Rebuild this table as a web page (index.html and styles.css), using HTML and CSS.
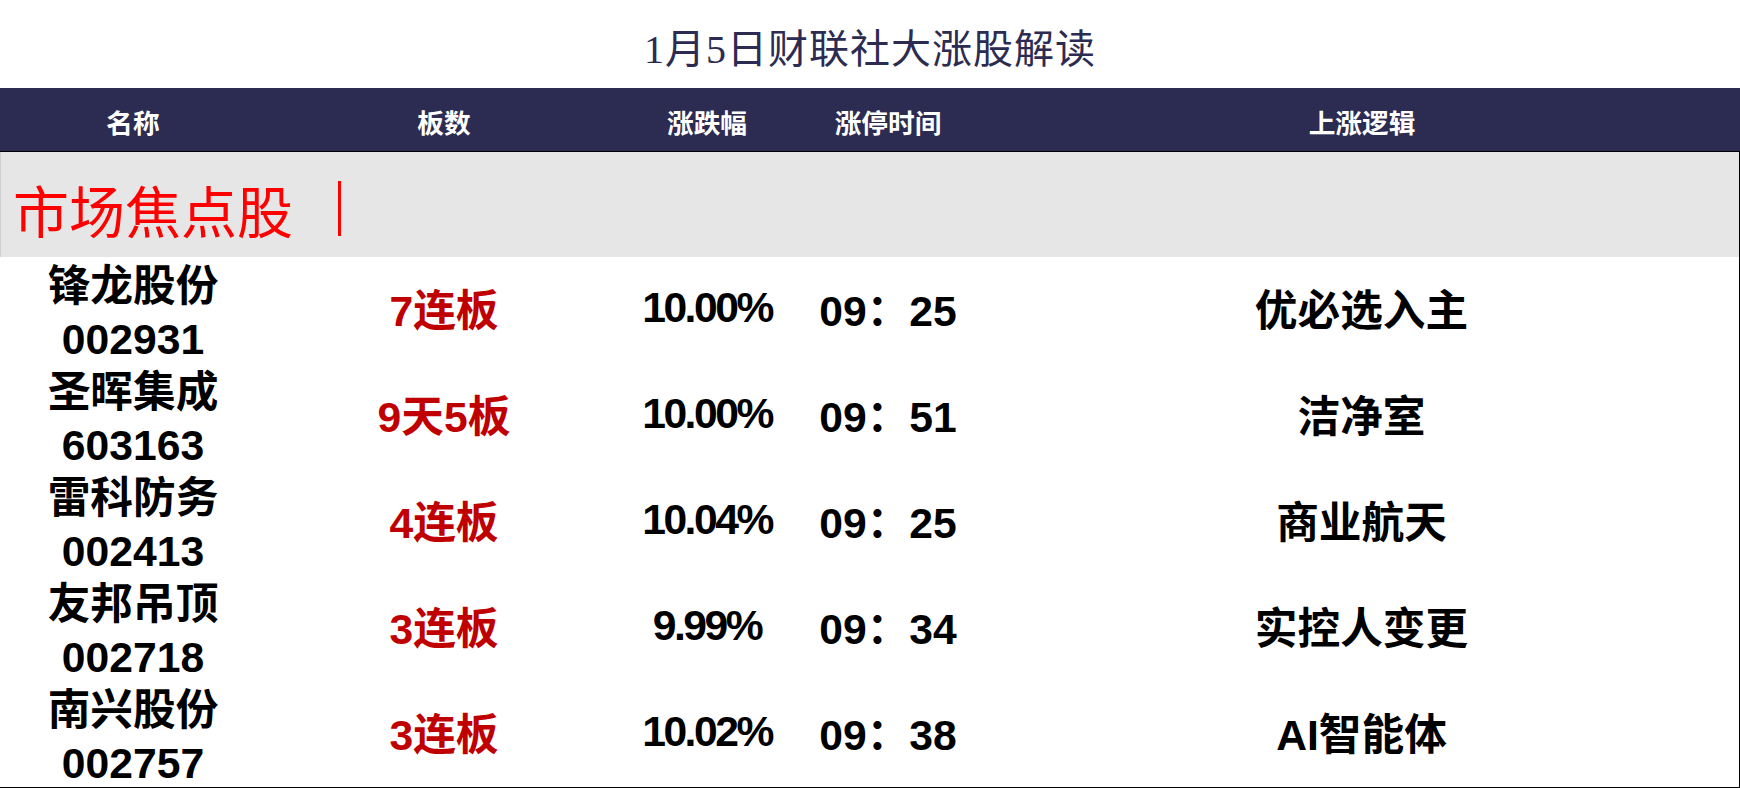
FILE: index.html
```html
<!DOCTYPE html>
<html lang="zh-CN">
<head>
<meta charset="utf-8">
<title>1月5日财联社大涨股解读</title>
<link rel="stylesheet" href="styles.css">
</head>
<body>
<div class="page">
  <h1 class="title">1月5日财联社大涨股解读</h1>
  <div class="thead">
    <div class="th">名称</div>
    <div class="th">板数</div>
    <div class="th">涨跌幅</div>
    <div class="th">涨停时间</div>
    <div class="th">上涨逻辑</div>
  </div>
  <div class="tbody">
    <div class="section"><span class="section-text">市场焦点股</span><span class="section-bar"></span></div>
    <div class="row">
      <div class="cell name">锋龙股份<br>002931</div>
      <div class="cell board">7连板</div>
      <div class="cell pct">10.00%</div>
      <div class="cell time">09：25</div>
      <div class="cell logic">优必选入主</div>
    </div>
    <div class="row">
      <div class="cell name">圣晖集成<br>603163</div>
      <div class="cell board">9天5板</div>
      <div class="cell pct">10.00%</div>
      <div class="cell time">09：51</div>
      <div class="cell logic">洁净室</div>
    </div>
    <div class="row">
      <div class="cell name">雷科防务<br>002413</div>
      <div class="cell board">4连板</div>
      <div class="cell pct">10.04%</div>
      <div class="cell time">09：25</div>
      <div class="cell logic">商业航天</div>
    </div>
    <div class="row">
      <div class="cell name">友邦吊顶<br>002718</div>
      <div class="cell board">3连板</div>
      <div class="cell pct">9.99%</div>
      <div class="cell time">09：34</div>
      <div class="cell logic">实控人变更</div>
    </div>
    <div class="row">
      <div class="cell name">南兴股份<br>002757</div>
      <div class="cell board">3连板</div>
      <div class="cell pct">10.02%</div>
      <div class="cell time">09：38</div>
      <div class="cell logic">AI智能体</div>
    </div>
  </div>
</div>
</body>
</html>
```

FILE: styles.css
```css
* { box-sizing: border-box; }
html, body { margin: 0; padding: 0; background: #ffffff; }
body { width: 1740px; height: 788px; overflow: hidden; }

.page { display: flex; flex-direction: column; width: 1740px; }

.title {
  margin: 0;
  height: 88px;
  display: flex;
  align-items: center;
  justify-content: center;
  padding-top: 4px;
  font-family: "Liberation Serif", "Noto Sans CJK SC", serif;
  font-weight: 400;
  font-size: 40px;
  letter-spacing: 1px;
  color: #2c2b52;
}

.thead {
  display: grid;
  grid-template-columns: 266px 356px 170px 192px 756px;
  height: 64px;
  background: #2c2b52;
  border-bottom: 1px solid #000;
}
.th {
  display: flex;
  align-items: center;
  justify-content: center;
  padding-top: 3px;
  color: #ffffff;
  font-family: "Noto Sans CJK SC", sans-serif;
  font-weight: 700;
  font-size: 26.7px;
}

.tbody {
  display: flex;
  flex-direction: column;
  border-right: 1px solid #000;
  border-bottom: 1px solid #000;
}

.section {
  height: 105px;
  background: #e6e6e6;
  border-left: 1px solid #cfcfcf;
  display: flex;
  align-items: center;
  padding-left: 12px;
  padding-top: 8px;
}
.section-text {
  font-family: "Noto Sans CJK SC", serif;
  font-weight: 400;
  font-size: 56px;
  line-height: 60px;
  color: #ff0000;
}
.section-bar {
  display: inline-block;
  width: 3px;
  height: 55px;
  background: #ff0000;
  margin-left: 45px;
}

.row {
  display: grid;
  grid-template-columns: 266px 356px 170px 192px 755px;
  height: 106px;
}
.cell {
  display: flex;
  align-items: center;
  justify-content: center;
  text-align: center;
  font-family: "Liberation Sans", "Noto Sans CJK SC", sans-serif;
  font-weight: 700;
  font-size: 42.67px;
  color: #000;
  padding-bottom: 8px;
}
.name { line-height: 53px; padding-bottom: 0; padding-top: 3px; }
.board { color: #c00000; }
.pct { letter-spacing: -2.5px; }
```
